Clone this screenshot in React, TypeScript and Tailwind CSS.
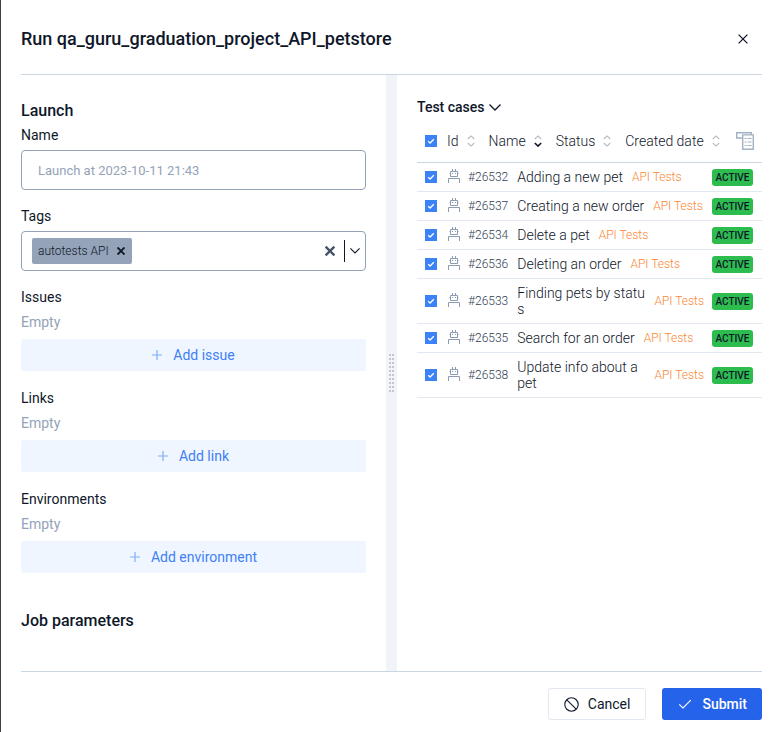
import { useId } from 'react'

type TestCase = { id: number; name: string }

const testCases: TestCase[] = [
  { id: 26532, name: 'Adding a new pet' },
  { id: 26537, name: 'Creating a new order' },
  { id: 26534, name: 'Delete a pet' },
  { id: 26536, name: 'Deleting an order' },
  { id: 26533, name: 'Finding pets by status' },
  { id: 26535, name: 'Search for an order' },
  { id: 26538, name: 'Update info about a pet' },
]

function CloseIcon({ className, width }: { className: string; width: number }) {
  return (
    <svg className={className} viewBox="0 0 10 10" fill="none" stroke="currentColor" strokeWidth={width} aria-hidden="true">
      <path d="M0.6 0.6 9.4 9.4M9.4 0.6 0.6 9.4" />
    </svg>
  )
}

function ChevronIcon({ className }: { className: string }) {
  return (
    <svg className={className} viewBox="0 0 12 7" fill="none" stroke="currentColor" strokeWidth="1.3" aria-hidden="true">
      <path d="M0.5 0.5 6 6 11.5 0.5" />
    </svg>
  )
}

function RobotIcon() {
  return (
    <svg className="h-[14px] w-3 shrink-0 text-[#8d9bb0]" viewBox="0 0 12 14" fill="none" stroke="currentColor" aria-hidden="true">
      <path d="M4.5 0v2.5M7.5 0v2.5M2.5 2.5h7v5h-7zM1.5 4.5h1M9.5 4.5h1M0.5 14V9.5h11V14" />
      <path d="M4 4.5h1M7 4.5h1" />
    </svg>
  )
}

function SortIcon({ active = false }: { active?: boolean }) {
  return (
    <svg className="h-3 w-2 shrink-0" viewBox="0 0 8 12" fill="none" stroke="#b4b8be" strokeWidth="1.1" aria-hidden="true">
      <path d="M0.8 4 4 0.9 7.2 4" />
      <path d="M0.8 8 4 11.1 7.2 8" className={active ? 'stroke-[#0f172a] stroke-[1.6]' : ''} />
    </svg>
  )
}

function ColumnsIcon() {
  return (
    <svg className="h-[18px] w-[18px]" viewBox="0 0 18 18" fill="none" stroke="#a3b1c5" strokeWidth="1.4" aria-hidden="true">
      <path d="M6.5 6H0.7V0.7h14.6v2" />
      <path d="M6.7 2.9h10.6v14.4H6.7z" />
      <path d="M8.6 6.5h2M11.6 6.5h4M8.6 10h2M11.6 10h4M8.6 13.5h2M11.6 13.5h4" strokeWidth="1" />
    </svg>
  )
}

function Checkbox({ label }: { label: string }) {
  return (
    <label className="grid size-3 shrink-0 cursor-pointer">
      <input
        type="checkbox"
        defaultChecked
        aria-label={label}
        className="peer col-start-1 row-start-1 size-3 cursor-pointer appearance-none border border-slate-400 checked:border-[#3b82f6] checked:bg-[#3b82f6]"
      />
      <svg
        className="pointer-events-none invisible col-start-1 row-start-1 size-3 peer-checked:visible"
        viewBox="0 0 12 12"
        fill="none"
        stroke="white"
        strokeWidth="1.3"
        aria-hidden="true"
      >
        <path d="M3.2 6.2 5.1 8 8.8 4.3" />
      </svg>
    </label>
  )
}

function EmptySection({ title, action }: { title: string; action: string }) {
  return (
    <section>
      <h3 className="text-sm leading-6">{title}</h3>
      <p className="mb-1 text-sm leading-[26px] text-[#94a3b8]">Empty</p>
      <button type="button" className="flex h-8 w-full items-center justify-center gap-[11px] rounded-xs bg-[#eff6ff] text-sm text-[#3f7ff5]">
        <svg className="size-[10px] text-[#7eaefb]" viewBox="0 0 10 10" fill="none" stroke="currentColor" aria-hidden="true">
          <path d="M5 0v10M0 5h10" strokeWidth="1.2" />
        </svg>
        {action}
      </button>
    </section>
  )
}

function SortHeader({ title, active }: { title: string; active?: boolean }) {
  return (
    <th className="mr-[14px] font-light">
      <button type="button" className="flex items-center gap-2 whitespace-nowrap">
        {title}
        <SortIcon active={active} />
      </button>
    </th>
  )
}

export default function App() {
  const titleId = useId()
  const nameId = useId()
  const tagsId = useId()

  return (
    <div
      role="dialog"
      aria-labelledby={titleId}
      className="flex min-h-screen flex-col border-l border-[#3f3f43] bg-white pr-[18px] pl-5 font-['Roboto',sans-serif] text-[#0f172a]"
    >
      <header className="flex h-[75px] items-center justify-between border-b border-slate-300 pt-1">
        <h1 id={titleId} className="text-lg font-medium">
          Run qa_guru_graduation_project_API_petstore
        </h1>
        <button type="button" aria-label="Close" className="p-[14px]">
          <CloseIcon className="size-[10px]" width={1.3} />
        </button>
      </header>

      <main className="flex flex-1">
        <div className="min-w-0 flex-1 pt-6 pr-5">
          <h2 className="text-base leading-6 font-medium">Launch</h2>
          <div className="flex flex-col gap-[14px]">
            <div>
              <label htmlFor={nameId} className="mb-[3px] block text-sm leading-6">
                Name
              </label>
              <input
                id={nameId}
                type="text"
                placeholder="Launch at 2023-10-11 21:43"
                className="block h-10 w-full rounded border border-[#94a3b8] px-4 text-[13px] placeholder:text-[#94a3b8]"
              />
            </div>
            <div>
              <label htmlFor={tagsId} className="mb-[3px] block text-sm leading-6">
                Tags
              </label>
              <div className="flex h-10 items-center rounded border border-[#94a3b8] pr-[5px] pl-[10px]">
                <span className="flex h-[26px] items-center gap-2 rounded-xs bg-[#94a3b8] pr-[7px] pl-[6px] text-xs font-light">
                  autotests API
                  <button type="button" aria-label="Remove autotests API">
                    <CloseIcon className="size-2" width={2.4} />
                  </button>
                </span>
                <input id={tagsId} type="text" className="min-w-0 flex-1 text-sm outline-none" />
                <button type="button" aria-label="Clear tags" className="text-[#475569]">
                  <CloseIcon className="size-[10px]" width={2.4} />
                </button>
                <span className="mr-[5px] ml-[9px] h-[22px] w-px bg-[#0f172a]" />
                <button type="button" aria-label="Show tags">
                  <ChevronIcon className="w-[10px]" />
                </button>
              </div>
            </div>
          </div>
          <div className="mt-[14px] flex flex-col gap-[15px]">
            <EmptySection title="Issues" action="Add issue" />
            <EmptySection title="Links" action="Add link" />
            <EmptySection title="Environments" action="Add environment" />
          </div>
          <h2 className="mt-9 text-base leading-6 font-medium">Job parameters</h2>
        </div>

        <div role="separator" className="grid w-[11px] place-content-center bg-[#f0f4f9]">
          <svg className="h-[38px] w-[5px]" viewBox="0 0 5 38" aria-hidden="true">
            <path d="M1 0v38M4 0v38" stroke="#c6c9ce" strokeWidth="2" strokeDasharray="2 2" />
          </svg>
        </div>

        <div className="min-w-0 flex-1 pt-5 pl-5">
          <button type="button" className="flex h-6 items-center gap-1 text-sm font-medium">
            Test cases
            <ChevronIcon className="w-3" />
          </button>
          <table className="block">
            <thead className="block">
              <tr className="flex h-11 items-center border-b border-slate-300 px-2 text-left text-sm">
                <th className="mr-[10px] font-normal">
                  <Checkbox label="Select all" />
                </th>
                <SortHeader title="Id" />
                <SortHeader title="Name" active />
                <SortHeader title="Status" />
                <SortHeader title="Created date" />
                <th className="ml-auto">
                  <button type="button" aria-label="Configure columns" className="block">
                    <ColumnsIcon />
                  </button>
                </th>
              </tr>
            </thead>
            <tbody className="block">
              {testCases.map((test) => (
                <tr key={test.id} className="flex min-h-[29px] items-center border-b border-slate-200 py-1 pr-[9px] pl-2">
                  <td>
                    <Checkbox label={test.name} />
                  </td>
                  <td className="ml-[11px] pb-0.5">
                    <RobotIcon />
                  </td>
                  <td className="ml-2 text-xs font-light text-[#334155]">#{test.id}</td>
                  <td className="ml-[9px] py-0.5 text-sm leading-4 font-light break-all">{test.name}</td>
                  <td className="ml-[9px] shrink-0 text-xs font-light whitespace-nowrap text-[#fb8532]">API Tests</td>
                  <td className="ml-auto shrink-0 pl-2">
                    <span className="block h-[17px] w-[41px] rounded-[3px] bg-[#2dbd4f] text-center text-[10px] leading-[17px] font-medium">
                      ACTIVE
                    </span>
                  </td>
                </tr>
              ))}
            </tbody>
          </table>
        </div>
      </main>

      <footer className="flex h-[61px] items-center justify-end gap-4 border-t border-slate-300 pt-1">
        <button type="button" className="flex h-8 items-center gap-[9px] rounded-[3px] border border-slate-200 px-[15px] text-sm">
          <svg className="size-[15px]" viewBox="0 0 15 15" fill="none" stroke="currentColor" strokeWidth="1.1" aria-hidden="true">
            <circle cx="7.5" cy="7.5" r="6.7" />
            <path d="m2.8 2.8 9.4 9.4" />
          </svg>
          Cancel
        </button>
        <button type="submit" className="flex h-8 items-center gap-[9px] rounded-[3px] bg-[#2563eb] px-[15px] text-sm font-medium text-white">
          <svg className="h-4 w-4" viewBox="0 0 16 16" fill="none" stroke="currentColor" strokeWidth="1.1" aria-hidden="true">
            <path d="M2.2 8.4 6 12 13.8 4.2" />
          </svg>
          Submit
        </button>
      </footer>
    </div>
  )
}
